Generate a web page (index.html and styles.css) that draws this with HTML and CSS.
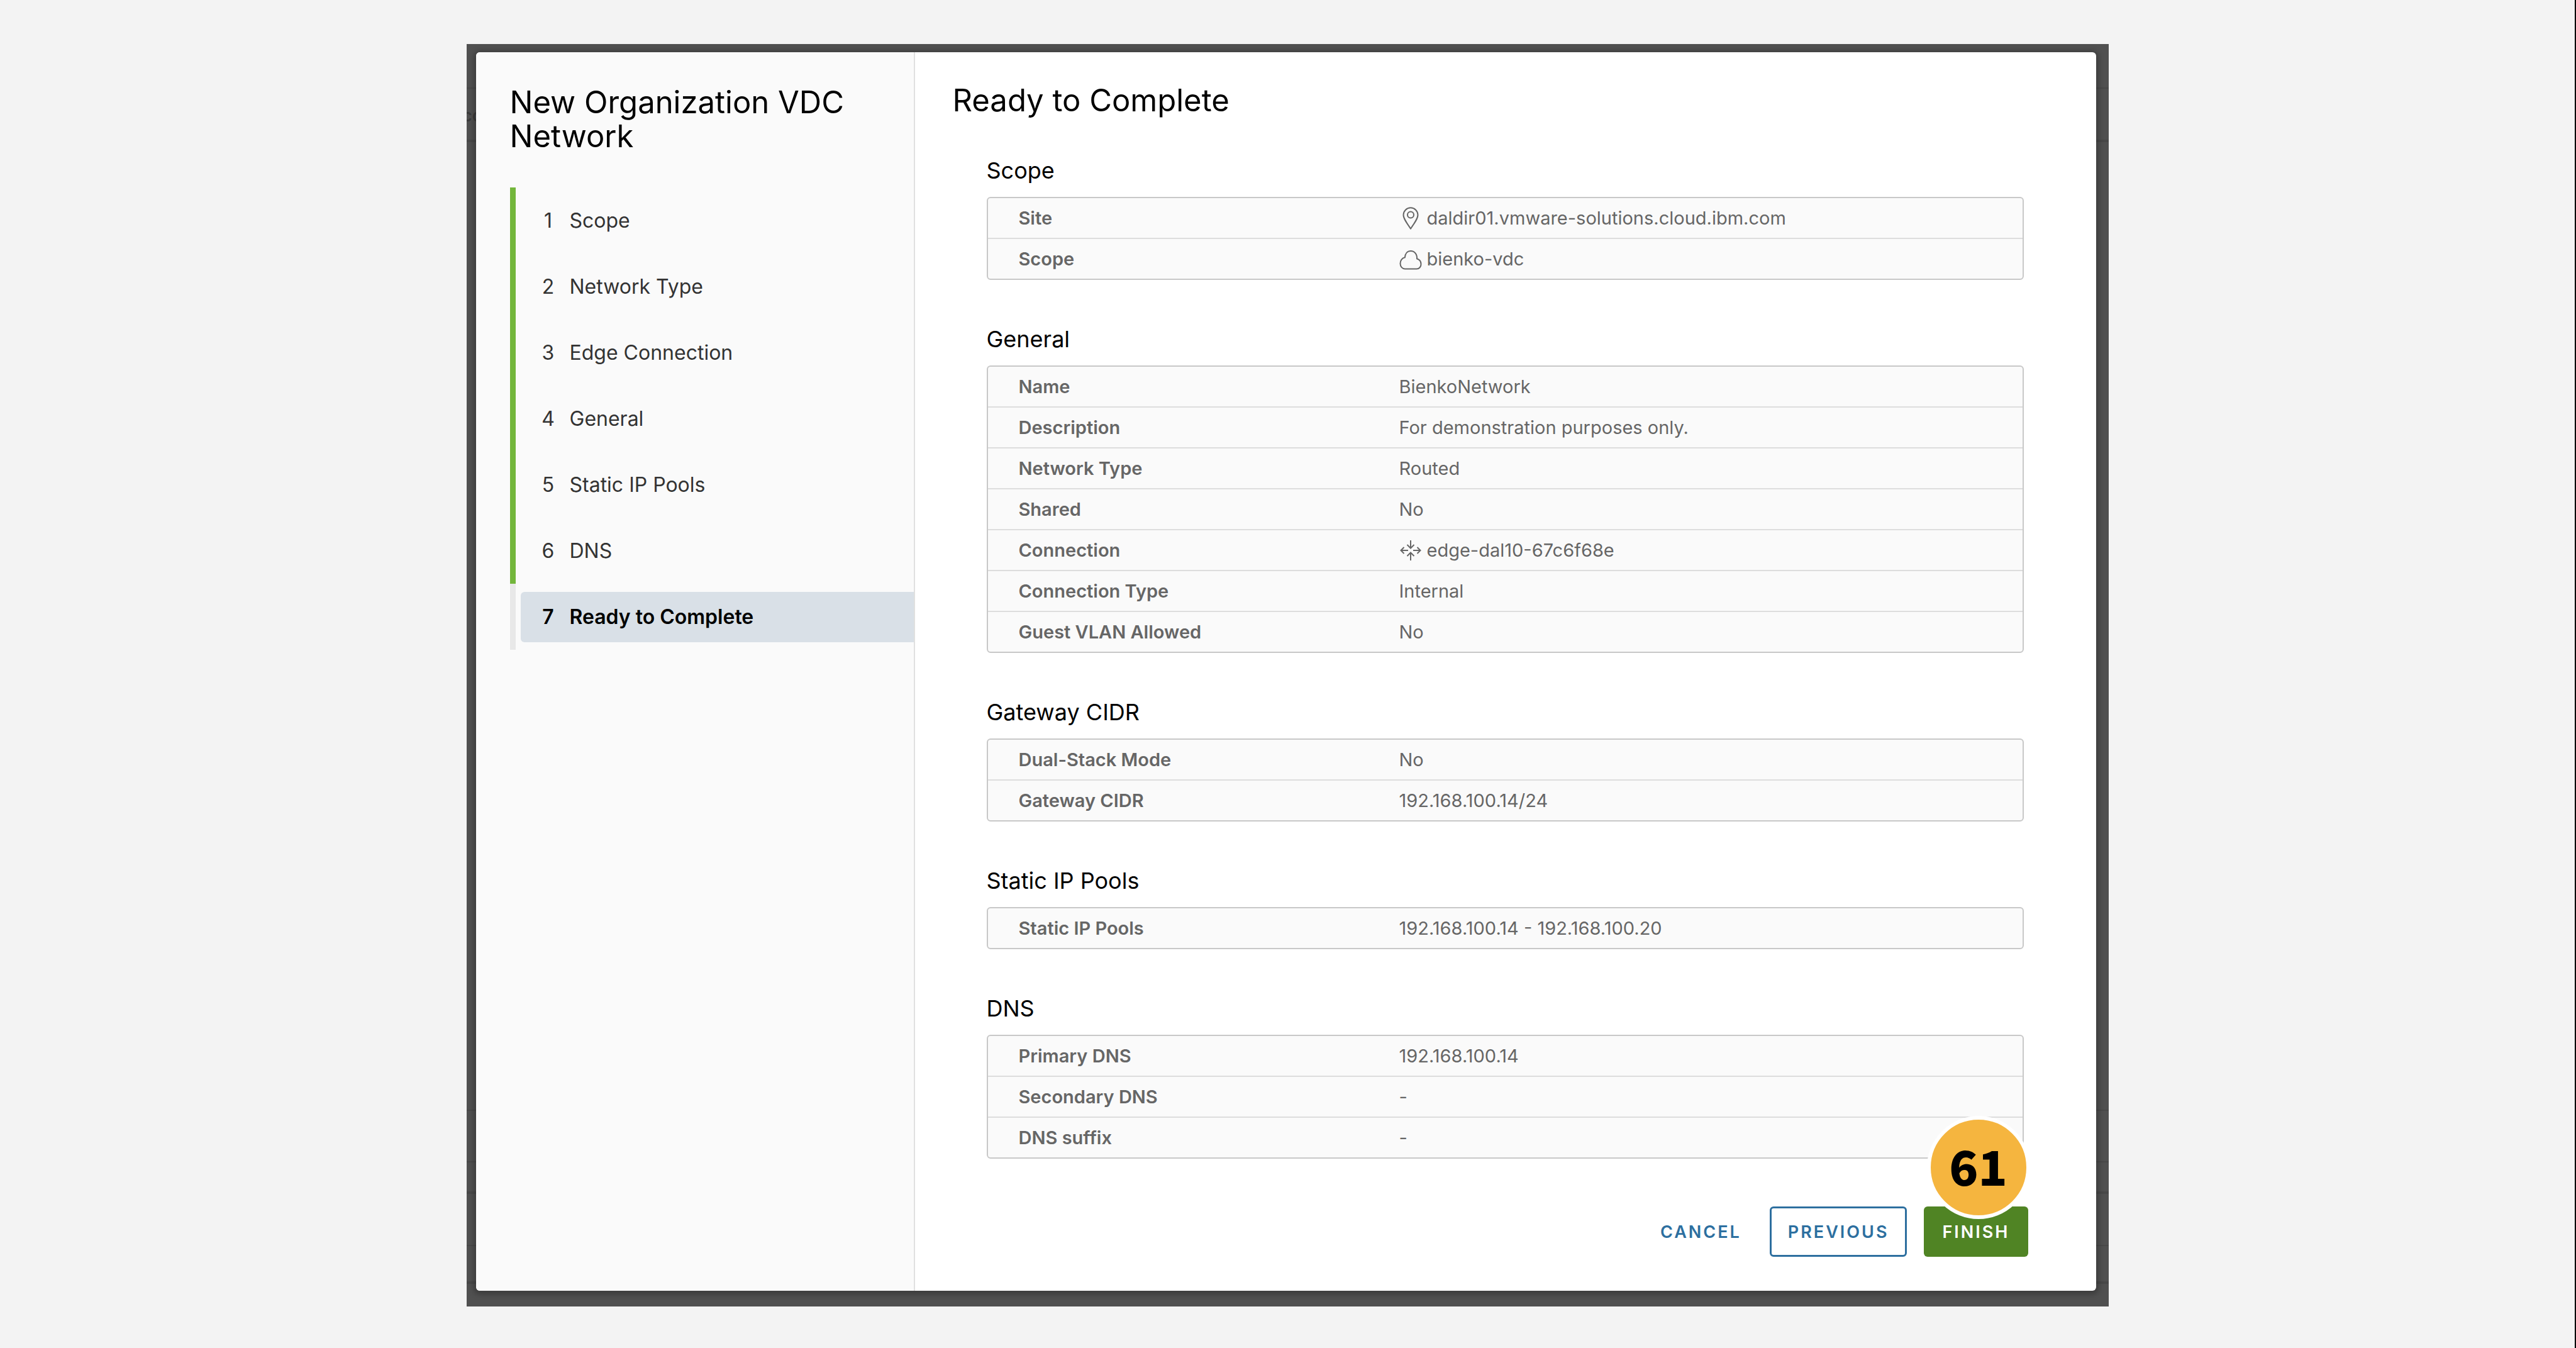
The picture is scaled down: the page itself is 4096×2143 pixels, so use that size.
FILE: index.html
```html
<!DOCTYPE html>
<html lang="en">
<head>
<meta charset="utf-8">
<title>New Organization VDC Network</title>
<link rel="stylesheet" href="styles.css">
</head>
<body>
<div class="page">
  <div class="backdrop">
    <span class="behind-text" aria-hidden="true">cc</span>
    <div class="wizard" role="dialog" aria-labelledby="wizard-title">
      <aside class="sidebar">
        <h1 class="wizard-title" id="wizard-title">New Organization VDC Network</h1>
        <ol class="steps">
          <li class="step done"><button type="button" class="step-link"><span class="num">1</span>Scope</button></li>
          <li class="step done"><button type="button" class="step-link"><span class="num">2</span>Network Type</button></li>
          <li class="step done"><button type="button" class="step-link"><span class="num">3</span>Edge Connection</button></li>
          <li class="step done"><button type="button" class="step-link"><span class="num">4</span>General</button></li>
          <li class="step done"><button type="button" class="step-link"><span class="num">5</span>Static IP Pools</button></li>
          <li class="step done"><button type="button" class="step-link"><span class="num">6</span>DNS</button></li>
          <li class="step"><button type="button" class="step-link current" aria-current="step"><span class="num">7</span>Ready to Complete</button></li>
        </ol>
      </aside>
      <main class="content">
        <h2 class="page-title">Ready to Complete</h2>

        <section class="group">
          <h3 class="group-title" id="g-scope">Scope</h3>
          <table class="facts" aria-labelledby="g-scope">
            <tr><th scope="row">Site</th><td><span class="with-icon"><svg class="icon" viewBox="0 0 36 36" aria-hidden="true"><path d="M18 34.5C12 26 6.500 18.500 6.500 12.800a11.500 11.500 0 0 1 23 0C29.500 18.500 24 26 18 34.500Z"/><circle cx="18" cy="12.500" r="5"/></svg>daldir01.vmware-solutions.cloud.ibm.com</span></td></tr>
            <tr><th scope="row">Scope</th><td><span class="with-icon"><svg class="icon" viewBox="0 0 36 36" aria-hidden="true"><path d="M9 33.500h18.500a7 7 0 0 0 7-7.500c0-4.200-2.700-7.500-6.500-8.700.600-7-3.800-12.300-9.700-12.300-5.600 0-9 4.500-9.500 10.300C4.500 16 1.500 20 1.500 25c0 5 3.500 8.500 7.500 8.500Z"/></svg>bienko-vdc</span></td></tr>
          </table>
        </section>

        <section class="group">
          <h3 class="group-title" id="g-general">General</h3>
          <table class="facts" aria-labelledby="g-general">
            <tr><th scope="row">Name</th><td>BienkoNetwork</td></tr>
            <tr><th scope="row">Description</th><td>For demonstration purposes only.</td></tr>
            <tr><th scope="row">Network Type</th><td>Routed</td></tr>
            <tr><th scope="row">Shared</th><td>No</td></tr>
            <tr><th scope="row">Connection</th><td><span class="with-icon"><svg class="icon" viewBox="0 0 36 36" aria-hidden="true"><path d="M18 2v12M12.500 9l5.500 5.500 5.500-5.500M18 34v-12M12.500 27l5.500-5.500 5.500 5.500M14 18H2.500M7.500 13L2.500 18l5 5M22 18h11.500M28.500 13l5 5-5 5"/></svg>edge-dal10-67c6f68e</span></td></tr>
            <tr><th scope="row">Connection Type</th><td>Internal</td></tr>
            <tr><th scope="row">Guest VLAN Allowed</th><td>No</td></tr>
          </table>
        </section>

        <section class="group">
          <h3 class="group-title" id="g-gateway">Gateway CIDR</h3>
          <table class="facts" aria-labelledby="g-gateway">
            <tr><th scope="row">Dual-Stack Mode</th><td>No</td></tr>
            <tr><th scope="row">Gateway CIDR</th><td>192.168.100.14/24</td></tr>
          </table>
        </section>

        <section class="group">
          <h3 class="group-title" id="g-pools">Static IP Pools</h3>
          <table class="facts" aria-labelledby="g-pools">
            <tr><th scope="row">Static IP Pools</th><td>192.168.100.14 - 192.168.100.20</td></tr>
          </table>
        </section>

        <section class="group">
          <h3 class="group-title" id="g-dns">DNS</h3>
          <table class="facts" aria-labelledby="g-dns">
            <tr><th scope="row">Primary DNS</th><td>192.168.100.14</td></tr>
            <tr><th scope="row">Secondary DNS</th><td>-</td></tr>
            <tr><th scope="row">DNS suffix</th><td>-</td></tr>
          </table>
        </section>

        <footer class="actions">
          <button type="button" class="btn btn-link">CANCEL</button>
          <button type="button" class="btn btn-outline">PREVIOUS</button>
          <div class="finish">
            <button type="button" class="btn btn-success">FINISH</button>
            <span class="callout">61</span>
          </div>
        </footer>
      </main>
    </div>
  </div>
</div>
</body>
</html>
```
FILE: styles.css
```css
* {
  box-sizing: border-box;
}

body {
  margin: 0;
  background: #f3f3f3;
  color: #000;
  font-family: Inter, "Liberation Sans", sans-serif;
  font-size: 29px;
}

button {
  font: inherit;
  color: inherit;
  margin: 0;
  cursor: pointer;
}

h1, h2, h3 {
  margin: 0;
}

.page {
  min-height: 100vh;
  padding: 70px 16px 66px;
  border-right: 2px solid #000;
}

.backdrop {
  position: relative;
  max-width: 2611px;
  margin: 0 auto;
  padding: 13px 20px 25px 15px;
  overflow: hidden;
  background:
    linear-gradient(#484848, #484848) 0 69px / 100% 2px no-repeat,
    linear-gradient(#484848, #484848) 0 152px / 100% 4px no-repeat,
    linear-gradient(#484848, #484848) 0 1694px / 100% 2px no-repeat,
    linear-gradient(#484848, #484848) 0 1776px / 100% 2px no-repeat,
    linear-gradient(#484848, #484848) 0 1824px / 100% 4px no-repeat,
    linear-gradient(#484848, #484848) 0 1909px / 100% 2px no-repeat,
    linear-gradient(#484848, #484848) 0 1967px / 100% 4px no-repeat,
    #505050;
}

.behind-text {
  position: absolute;
  left: -6px;
  top: 98px;
  color: #3b3b3b;
  font-size: 26px;
  font-weight: 600;
  line-height: 32px;
}

.wizard {
  position: relative;
  display: flex;
  min-height: 1969px;
  background: #fff;
  border-radius: 6px;
  box-shadow: 0 2px 8px 4px rgba(0, 0, 0, 0.25);
}

/* Step list */

.sidebar {
  flex: 0 0 698px;
  padding: 53px 0 0 54px;
  background: #fafafa;
  border-right: 2px solid #e0e0e0;
  border-radius: 6px 0 0 6px;
}

.wizard-title {
  max-width: 600px;
  font-size: 49px;
  font-weight: 400;
  line-height: 54px;
}

.steps {
  display: grid;
  grid-auto-rows: 105px;
  margin: 54px 0 0;
  padding: 0;
  list-style: none;
}

.step {
  display: flex;
  align-items: center;
  padding-left: 8px;
  border-left: 9px solid #e8e8e8;
}

.step.done {
  border-left-color: #73b63b;
}

.step-link {
  display: flex;
  align-items: center;
  width: 100%;
  height: 80px;
  padding: 0;
  border: 0;
  border-radius: 6px 0 0 6px;
  background: none;
  color: #333;
  font-size: 32px;
  text-align: left;
}

.step-link.current {
  background: #d9e0e7;
  color: #000;
  font-weight: 600;
}

.num {
  flex: 0 0 22px;
  margin: 0 23px 0 33px;
  text-align: center;
}

/* Summary */

.content {
  flex: 1;
  min-width: 0;
  padding: 46px 108px 54px 60px;
}

.page-title {
  font-size: 49px;
  font-weight: 400;
  line-height: 62px;
}

.group {
  padding: 0 7px 0 54px;
}

.group-title {
  height: 136px;
  padding-top: 66px;
  font-size: 36px;
  font-weight: 400;
  line-height: 56px;
}

.page-title + .group .group-title {
  height: 122px;
  padding-top: 52px;
}

.facts {
  width: 100%;
  table-layout: fixed;
  border: 2px solid #c8c8c8;
  border-radius: 6px;
  border-spacing: 0;
  background: #fafafa;
  color: #666;
}

.facts th,
.facts td {
  height: 65px;
  padding: 0;
  border-bottom: 2px solid #ddd;
  line-height: 40px;
  text-align: left;
}

.facts tr:last-child th,
.facts tr:last-child td {
  height: 63px;
  border-bottom: 0;
}

.facts th {
  width: 654px;
  padding-left: 49px;
  font-weight: 600;
}

.with-icon {
  display: flex;
  align-items: center;
  gap: 8px;
}

.icon {
  width: 36px;
  height: 36px;
  fill: none;
  stroke: #666;
  stroke-width: 2;
}

/* Footer */

.actions {
  display: flex;
  justify-content: flex-end;
  margin-top: 76px;
}

.btn {
  height: 80px;
  padding: 0 26px;
  border: 3px solid transparent;
  border-radius: 6px;
  background: none;
  font-size: 27px;
  font-weight: 600;
  letter-spacing: 3px;
}

.btn-link {
  margin-right: 16px;
  color: #2d6f9f;
}

.btn-outline {
  margin-right: 27px;
  border-color: #2d6f9f;
  color: #2d6f9f;
}

.btn-success {
  background: #508424;
  color: #fff;
}

.finish {
  position: relative;
}

.callout {
  position: absolute;
  right: -3px;
  bottom: 60px;
  width: 164px;
  height: 164px;
  border: 6px solid #fff;
  border-radius: 50%;
  background: #f5b53f;
  color: #000;
  font-family: "Noto Sans CJK JP", sans-serif;
  font-size: 76px;
  font-weight: 900;
  line-height: 144px;
  text-align: center;
}
```
